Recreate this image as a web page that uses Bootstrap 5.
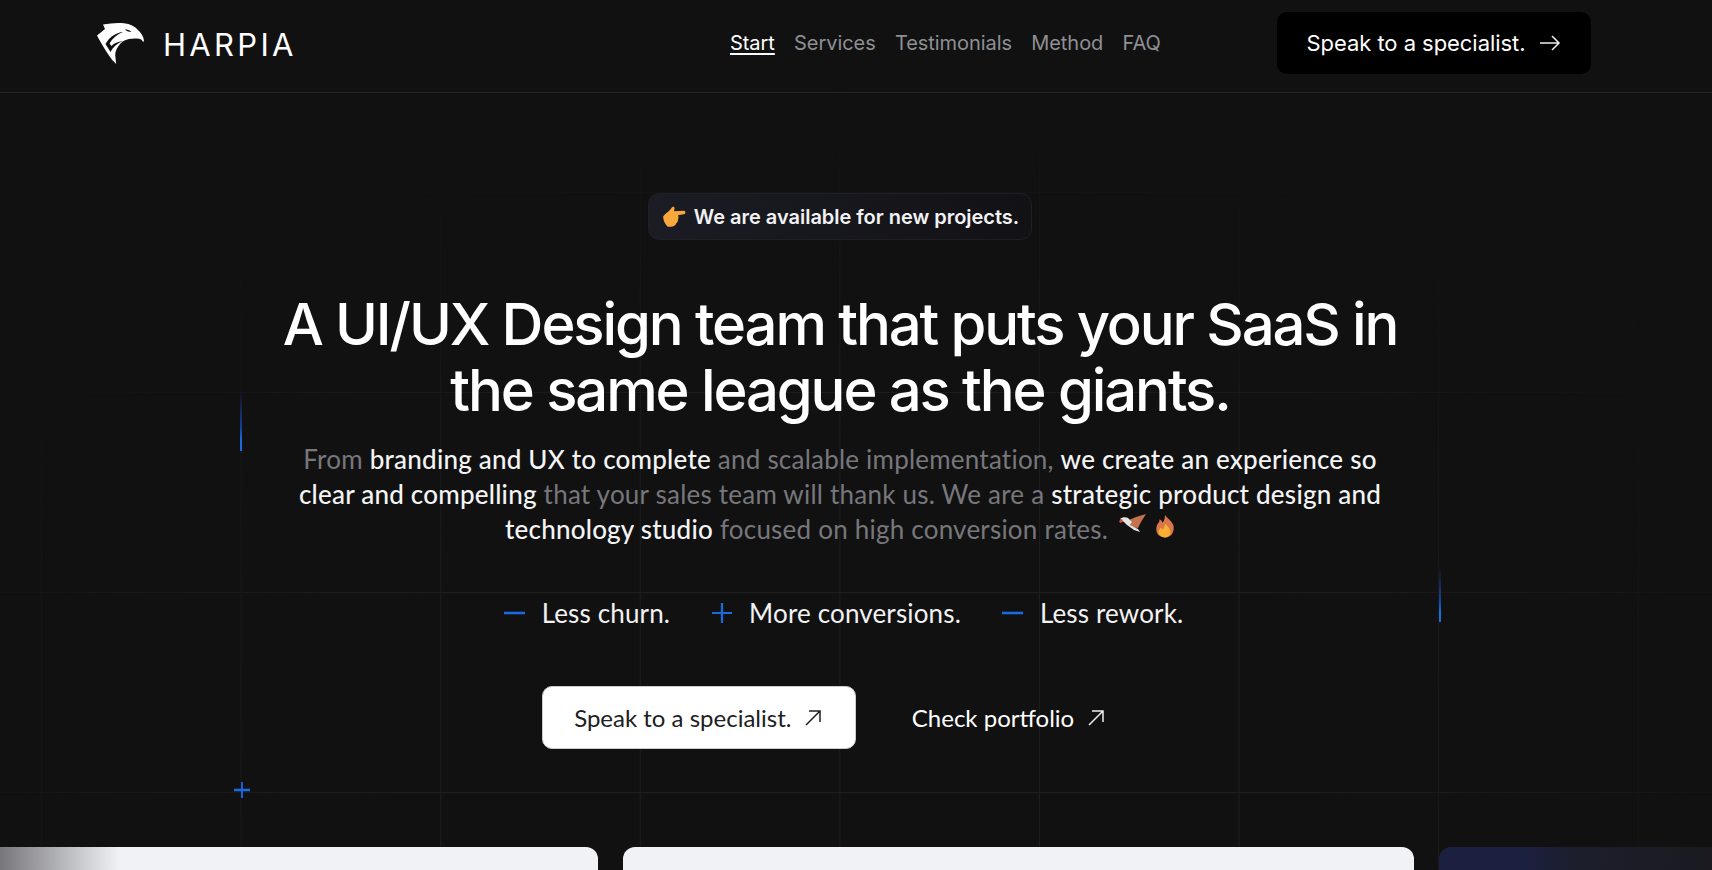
<!doctype html>
<html lang="en"><head><meta charset="utf-8">
<link href="https://cdn.jsdelivr.net/npm/bootstrap@5.3.0/dist/css/bootstrap.min.css" rel="stylesheet">
<style>
html,body{height:870px;overflow:hidden}
body{background:#111112;color:#fff;font-family:"Inter","Liberation Sans",sans-serif}
.page-shell{position:relative;height:870px;overflow:hidden}
.grid-layer{position:absolute;inset:0;pointer-events:none;
 background-image:linear-gradient(#1f1f20 1px,transparent 1px),linear-gradient(90deg,#1e1e1f 1px,transparent 1px);
 background-size:199.6px 200px;background-position:41px 192px;
 -webkit-mask-image:radial-gradient(ellipse 60% 75% at 50% 85%,#000 45%,transparent 100%);mask-image:radial-gradient(ellipse 60% 75% at 50% 85%,#000 45%,transparent 100%)}
.beam{position:absolute;width:2px;background:linear-gradient(180deg,transparent,#14409a 60%,#1a6ae0 80%)}
.beam-a{left:240px;top:392px;height:59px}
.beam-b{left:1439px;top:566px;height:56px}
.plus-mark{position:absolute;left:233px;top:781px;width:18px;height:18px}
.top-bar{height:93px;border-bottom:1px solid #262627;padding:0 255px 0 97px;position:relative}
.brand-word{font-family:"Inter",sans-serif;font-weight:400;font-size:31px;letter-spacing:3.3px;color:#fff;margin-left:18px;margin-top:-2px;text-decoration:none}
.menu-link{font-size:20px;color:#8f8f94;text-decoration:none;letter-spacing:-.05px}
.menu-link.on{color:#fff;text-decoration:underline;text-underline-offset:3px}
.menu-row{position:absolute;left:730px;top:0;height:86px;gap:19.2px}
.top-cta{position:absolute;left:1277px;top:12px;width:314px;height:62px;background:#000;border:0;border-radius:10px;color:#fff;font-size:22px;letter-spacing:-.05px}
.hero-col{position:relative;padding:100px 32px 0 0;text-align:center}
.avail-pill{display:inline-flex;align-items:center;height:47px;padding:0 12px 0 13px;border-radius:11px;border:1px solid #1f1f24;background:linear-gradient(90deg,#1b1c24,#121215);font-weight:600;font-size:20px;color:#f2f2f4;gap:8px;letter-spacing:-.02px}
.hero-head{font-size:58px;line-height:65.5px;font-weight:500;letter-spacing:-2.1px;margin:52px auto 0;width:1200px;color:#fff}
.hero-copy{font-family:"Lato",sans-serif;font-size:26px;line-height:35px;color:#77777c;width:1200px;margin:19px auto 0;font-weight:400;letter-spacing:.22px}
.hero-copy b{font-weight:500;color:#f4f4f5}
.point-row{gap:41px;margin-top:48px;padding-left:7px;font-size:26px;font-family:"Lato",sans-serif;letter-spacing:.15px;color:#f2f2f2;height:36px}
.act-row{margin-top:55px;gap:44px;padding-right:20px}
.act-main{width:314px;height:63px;border-radius:10px;background:#fff;color:#202022;font-size:24px;border:1px solid #ccc;font-family:"Lato",sans-serif}
.act-alt{background:none;border:0;color:#f1f1f1;font-size:24px;font-family:"Lato",sans-serif}
.tile-row{position:absolute;left:0;right:0;top:847px;height:40px;gap:25px}
.tile-a{width:598px;background:linear-gradient(90deg,#77777b,#f1f2f6 20%);border-radius:0 12px 0 0}
.tile-b{width:791px;background:#f1f2f6;border-radius:12px 12px 0 0}
.tile-c{flex:1;background:linear-gradient(90deg,#1b2040,#1b2040 30%,#1c1e2c 50%,#1a1a20);border-radius:12px 0 0 0}
</style></head>
<body>
<div class="page-shell">
 <div class="grid-layer"></div>
 <div class="beam beam-a"></div><div class="beam beam-b"></div>
 <svg class="plus-mark" viewBox="0 0 18 18"><path d="M1 9h16" stroke="#1a6ae0" stroke-width="2.6"/><path d="M9 1v16" stroke="#1a6ae0" stroke-width="1.8"/></svg>
 <header class="top-bar d-flex align-items-center">
  <svg width="48" height="42" viewBox="0 0 48 42" class="mb-1"><path fill="#fff" fill-rule="evenodd" d="M0 12.500L8 6 6 1.500C13 .3 20-.3 27 .3 33 1 38 3.500 41 7c3 3 5.500 6 6 10.500l-.8 1.700C45.500 17.500 44.500 16.500 43 16c-4-.8-8-.5-11 0-5 1-8 3.500-10.500 7C19 26.500 18 30 18.300 33l.9 8-4-4C10 30 4 20 0 12.500zM26 9C20 9.500 13 13 8.500 21l5 8C16 24 20 20.500 26 18c-5 .8-9 2-11.500 5l-2-2.500C15.500 15 20 11.500 26 9zM28 6.500c2 1.800 4 2.500 6.500 2.500-1.500-1.800-4-2.800-6.500-2.500z"/></svg>
  <a class="brand-word" href="#">HARPIA</a>
  <nav class="menu-row d-flex align-items-center">
   <a class="menu-link on" href="#">Start</a><a class="menu-link" href="#">Services</a><a class="menu-link" href="#">Testimonials</a><a class="menu-link" href="#">Method</a><a class="menu-link" href="#">FAQ</a>
  </nav>
  <button class="top-cta btn d-flex align-items-center justify-content-center gap-2 text-white">Speak to a specialist.
   <svg width="24" height="20" viewBox="0 0 24 20" fill="none" stroke="#eee" stroke-width="1.500" class="ms-1"><path d="M2 10h19M14 3l7 7-7 7"/></svg></button>
 </header>
 <main class="hero-col">
  <div class="avail-pill"><svg width="24" height="23" viewBox="0 0 21 20"><path fill="#f9a83c" d="M1 10C3 7 6 6 8 3 9 1 11 1 11 3L10.500 5.500 19 5C21 5 21 8 19 8L14 9C15 11 14 12 14 13 14 15 13 15 12.500 16 12 18 10 19 8 19L5 19C3 17 1 14 1 10Z"/></svg>We are available for new projects.</div>
  <h1 class="hero-head">A UI/UX Design team that puts your SaaS in<br>the same league as the giants.</h1>
  <p class="hero-copy">From <b>branding and UX to complete</b> and scalable implementation, <b>we create an experience so</b><br><b>clear and compelling</b> that your sales team will thank us. We are a <b>strategic product design and</b><br><b>technology studio</b> focused on high conversion rates.
   <svg width="28" height="22" viewBox="0 0 28 22" class="ms-1 align-text-top"><path fill="#c4714d" d="M10 7l7-3 10-3-5 8-3 6-7-1z"/><path fill="#e3e3e3" d="M1 6c2-2 6-2 8-1l4 4-2 3 8 4 2 3-6-2-7-5-3-3z"/><path fill="#d8502e" d="M0 8l3-2 1 3-3 1z"/></svg><svg width="20" height="27" viewBox="0 0 22 26" class="ms-2 align-text-top"><path fill="#d9764a" d="M11 0c1 3 7 6 9 11 2 6-1 14-9 14S0 19 2 12c1-3 3-3 3-7 2 1 3 2 3 4 2-2 3-5 3-9z"/><path fill="#f8b133" d="M11 10c2 2 6 5 6 9 0 3-3 6-6 6s-7-2-7-6c0-2 1-4 3-5 0 1 1 2 2 2 1-2 2-4 2-6z"/></svg></p>
  <div class="point-row d-flex justify-content-center align-items-center">
   <span class="d-flex align-items-center gap-3"><svg width="22" height="4" viewBox="0 0 22 4"><path d="M0 2h21" stroke="#1a6ae0" stroke-width="2.6"/></svg>Less churn.</span>
   <span class="d-flex align-items-center gap-3"><svg width="22" height="22" viewBox="0 0 22 22"><path d="M1 11h20M11 1v20" stroke="#1a6ae0" stroke-width="2.2"/></svg>More conversions.</span>
   <span class="d-flex align-items-center gap-3"><svg width="22" height="4" viewBox="0 0 22 4"><path d="M0 2h21" stroke="#1a6ae0" stroke-width="2.6"/></svg>Less rework.</span>
  </div>
  <div class="act-row d-flex justify-content-center align-items-center">
   <button class="act-main btn d-flex align-items-center justify-content-center gap-2">Speak to a specialist.
    <svg width="20" height="20" viewBox="0 0 20 20" fill="none" stroke="#202022" stroke-width="1.500" class="ms-1"><path d="M3 17L17 3M6 3h11v11"/></svg></button>
   <button class="act-alt btn d-flex align-items-center gap-2 text-white">Check portfolio
    <svg width="20" height="20" viewBox="0 0 20 20" fill="none" stroke="#eee" stroke-width="1.500" class="ms-1"><path d="M3 17L17 3M6 3h11v11"/></svg></button>
  </div>
 </main>
 <div class="tile-row d-flex"><div class="tile-a"></div><div class="tile-b"></div><div class="tile-c"></div></div>
</div>
<script src="https://cdn.jsdelivr.net/npm/bootstrap@5.3.0/dist/js/bootstrap.bundle.min.js"></script>
</body></html>
